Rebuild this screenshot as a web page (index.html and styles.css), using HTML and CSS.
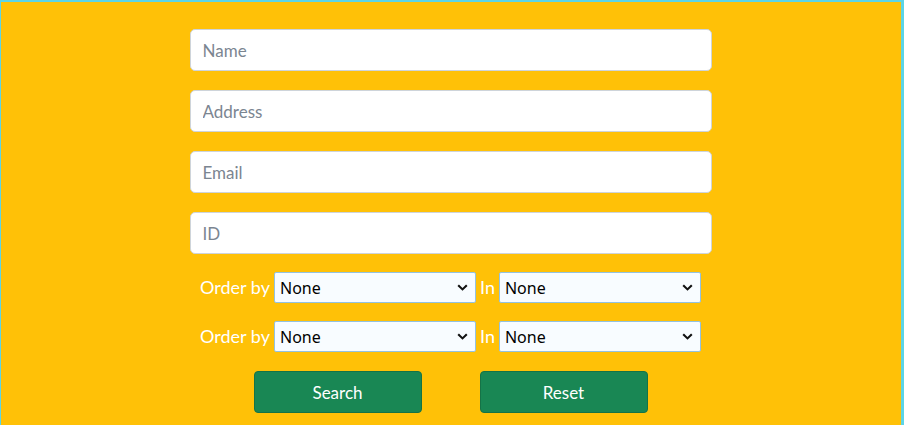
FILE: index.html
```html
<!DOCTYPE html>
<html>
<head>
<meta charset="utf-8">
<link rel="stylesheet" href="styles.css">
</head>
<body>
<div class="frame">
  <form class="search-form">
    <input class="field" type="text" placeholder="Name">
    <input class="field" type="text" placeholder="Address">
    <input class="field" type="text" placeholder="Email">
    <input class="field" type="text" placeholder="ID">
    <div class="order-row">
      <label class="lbl">Order by</label>
      <select class="sel"><option>None</option></select>
      <label class="lbl">In</label>
      <select class="sel"><option>None</option></select>
    </div>
    <div class="order-row">
      <label class="lbl">Order by</label>
      <select class="sel"><option>None</option></select>
      <label class="lbl">In</label>
      <select class="sel"><option>None</option></select>
    </div>
    <div class="buttons">
      <button type="button" class="btn">Search</button>
      <button type="button" class="btn">Reset</button>
    </div>
  </form>
</div>
</body>
</html>
```
FILE: styles.css
```css
html, body {
  margin: 0;
  padding: 0;
}
.frame {
  box-sizing: border-box;
  width: 904px;
  height: 425px;
  background: #ffc107;
  border-style: solid;
  border-color: #5dd5e6;
  border-width: 2px 3px 0 1px;
  font-family: Lato, "Open Sans", sans-serif;
}
.search-form {
  display: flex;
  flex-direction: column;
  align-items: center;
  padding-top: 27px;
  margin-left: -1px;
}
.field {
  box-sizing: border-box;
  width: 522px;
  height: 42px;
  margin-bottom: 19px;
  padding: 0 12px;
  border: 1px solid #ced4da;
  border-radius: 5px;
  background: #fff;
  font-family: inherit;
  font-size: 17px;
  color: #212529;
  outline: none;
}
.field::placeholder {
  color: #7b8591;
}
.order-row {
  display: flex;
  align-items: center;
  gap: 4px;
  height: 31px;
  margin-top: -1px;
  margin-bottom: 19px;
}
.lbl {
  color: #fff;
  font-size: 18px;
  line-height: 1;
  padding-bottom: 2px;
}
.sel {
  box-sizing: border-box;
  width: 202px;
  height: 31px;
  border: 1px solid #93c2e0;
  border-radius: 2px;
  -webkit-appearance: none;
  appearance: none;
  background-color: #f8fcff;
  background-image: url("data:image/svg+xml,%3Csvg xmlns='http://www.w3.org/2000/svg' width='11' height='7' viewBox='0 0 11 7'%3E%3Cpath d='M1.2 1.2 L5.5 5.4 L9.8 1.2' fill='none' stroke='%23111' stroke-width='2.1'/%3E%3C/svg%3E");
  background-repeat: no-repeat;
  background-position: right 7px center;
  font-family: "Noto Sans", sans-serif;
  font-size: 16px;
  color: #000;
  padding: 0 22px 0 5px;
}
.buttons {
  display: flex;
  gap: 58px;
}
.btn {
  box-sizing: border-box;
  width: 168px;
  height: 42px;
  border: 1px solid #157347;
  border-radius: 4px;
  background: #198754;
  color: #fff;
  font-family: inherit;
  font-size: 17px;
  cursor: pointer;
}
```
